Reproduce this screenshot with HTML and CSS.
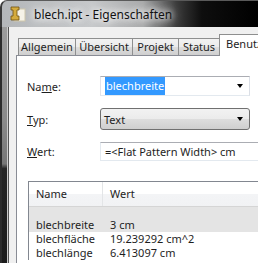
FILE: index.html
```html
<!DOCTYPE html>
<html lang="de">
<head>
    <meta charset="UTF-8" />
    <title>blech.ipt - Eigenschaften</title>
    <link rel="stylesheet" href="styles.css">
</head>
<body>
    <div class="window">
        <div class="titlebar">
            <svg class="app-icon" width="16" height="16" viewBox="0 0 16 16">
                <rect x="4" y="3" width="11" height="12" fill="#f6f3e8" stroke="#cfc7ac" stroke-width="1"/>
                <polygon points="1,1 9,1 9,4 7,4 7,10 9,10 9,14 1,14 1,10 3,10 3,4 1,4" fill="#d4ab3e" stroke="#6e5010" stroke-width="0.8"/>
            </svg>
            <span class="title">blech.ipt - Eigenschaften</span>
        </div>
        <div class="frame">
            <div class="frame-edge"></div>
            <div class="dialog">
                <div class="tabs">
                    <div class="tab tab-allgemein">Allgemein</div>
                    <div class="tab tab-uebersicht">Übersicht</div>
                    <div class="tab tab-projekt">Projekt</div>
                    <div class="tab tab-status">Status</div>
                    <div class="tab active">Benutzer</div>
                </div>
                <div class="panel">
                    <div class="form">
                        <label>Na<u>m</u>e:</label>
                        <div class="combo edit">
                            <span class="sel">blechbreite</span>
                            <span class="arrow"></span>
                        </div>

                        <label><u>T</u>yp:</label>
                        <div class="combo button">
                            <span>Text</span>
                            <span class="arrow"></span>
                        </div>

                        <label><u>W</u>ert:</label>
                        <div class="textbox">=&lt;Flat Pattern Width&gt; cm</div>
                    </div>

                    <div class="list">
                        <div class="row header">
                            <div class="col-name">Name</div>
                            <div class="col-value">Wert</div>
                        </div>
                        <div class="row selected">
                            <div class="col-name">blechbreite</div>
                            <div class="col-value">3 cm</div>
                        </div>
                        <div class="row">
                            <div class="col-name">blechfläche</div>
                            <div class="col-value">19.239292 cm^2</div>
                        </div>
                        <div class="row">
                            <div class="col-name">blechlänge</div>
                            <div class="col-value">6.413097 cm</div>
                        </div>
                    </div>
                </div>
            </div>
        </div>
    </div>
</body>
</html>
```

FILE: styles.css
```css
body {
    margin: 0;
    padding: 0;
    font-family: "Noto Sans", "Open Sans", sans-serif;
    font-size: 11px;
    color: #1e1e1e;
    background-color: #fff;
    overflow: hidden;
}

.window {
    width: 258px;
    height: 263px;
    display: flex;
    flex-direction: column;
    overflow: hidden;
}

.titlebar {
    height: 27px;
    box-sizing: border-box;
    display: flex;
    align-items: center;
    padding-left: 8px;
    border-top-left-radius: 7px;
    border-left: 2px solid #3a3a3a;
    border-top: 1px solid #5a5a5a;
    background: linear-gradient(to right, #b4b7ba 0%, #c6c8ca 35%, #a9aaab 55%, #3c3c3c 68%, #0e0e0e 78%, #000 100%);
}

.app-icon {
    flex: none;
    margin-right: 8px;
}

.title {
    font-size: 12px;
    color: #111;
    text-shadow: 0 0 6px #fff, 0 0 10px #fff, 0 0 14px #fff;
}

.frame {
    flex: 1;
    display: flex;
}

.frame-edge {
    width: 7px;
    border-left: 2px solid #2c2c2c;
    background: linear-gradient(to bottom, #9c9c9c 0%, #8a8a8a 40%, #777 58%, #262626 60%, #1c1c1c 100%);
    box-shadow: inset -1px 0 0 #555, inset -2px 0 0 #ccc;
}

.dialog {
    flex: 1;
    background-color: #f0f0f0;
    padding: 8px 0 0 7px;
    display: flex;
    flex-direction: column;
    min-width: 0;
}

.tabs {
    display: flex;
    align-items: flex-end;
    padding-left: 2px;
    height: 20px;
    position: relative;
    z-index: 1;
    white-space: nowrap;
}

.tab {
    flex: none;
    height: 17px;
    box-sizing: border-box;
    text-align: center;
    line-height: 15px;
    border: 1px solid #8e8f8f;
    border-bottom: none;
    margin-right: -1px;
    background: linear-gradient(to bottom, #f2f2f2 0%, #ebebeb 50%, #dddddd 51%, #cfcfcf 100%);
}

.tab-allgemein { width: 58px; }
.tab-uebersicht { width: 58px; }
.tab-projekt { width: 47px; }
.tab-status { width: 42px; }

.tab.active {
    height: 22px;
    margin-bottom: -1px;
    line-height: 18px;
    padding: 0 6px;
    text-align: left;
    background: #fff;
}

.panel {
    flex: 1;
    background-color: #fff;
    border: 1px solid #898c95;
    border-right: none;
    border-bottom: none;
    padding: 20px 0 0 10px;
}

.form {
    display: grid;
    grid-template-columns: 73px 150px;
    align-items: center;
    row-gap: 12px;
}

.form label {
    color: #1e1e1e;
}

.combo {
    height: 20px;
    box-sizing: border-box;
    display: flex;
    align-items: center;
    justify-content: space-between;
    padding: 0 6px 0 3px;
}

.combo.edit {
    border: 1px solid #abadb3;
    border-color: #abadb3 #dbdfe6 #e3e9ef #e2e3ea;
}

.combo.button {
    height: 22px;
    border: 1px solid #707070;
    border-radius: 3px;
    background: linear-gradient(to bottom, #f2f2f2 0%, #ebebeb 50%, #dddddd 51%, #cfcfcf 100%);
}

.sel {
    background-color: #3399ff;
    color: #fff;
    padding: 1px 1px 2px 1px;
    margin-left: 1px;
}

.arrow {
    width: 0;
    height: 0;
    border-left: 3px solid transparent;
    border-right: 3px solid transparent;
    border-top: 4px solid #000;
}

.textbox {
    height: 19px;
    box-sizing: border-box;
    width: 170px;
    line-height: 17px;
    padding-left: 4px;
    border: 1px solid #e3e9ef;
    border-top-color: #abadb3;
    white-space: nowrap;
}

.list {
    margin: 20px 0 0 1px;
    border: 1px solid #828790;
    border-right: none;
    border-bottom: none;
}

.row {
    display: flex;
    height: 14px;
    line-height: 14px;
    white-space: nowrap;
}

.row.header {
    height: 24px;
    line-height: 24px;
    background: linear-gradient(to bottom, #fff 0%, #fff 50%, #f3f4f6 51%, #f1f2f4 100%);
    border-bottom: 1px solid #d5d5d5;
}

.row.selected {
    height: 25px;
    align-items: flex-end;
    background-color: #e4e4e4;
}

.col-name {
    width: 74px;
    padding-left: 7px;
    box-sizing: border-box;
}

.header .col-name {
    border-right: 1px solid #e3e5e7;
}

.col-value {
    padding-left: 7px;
}
```
